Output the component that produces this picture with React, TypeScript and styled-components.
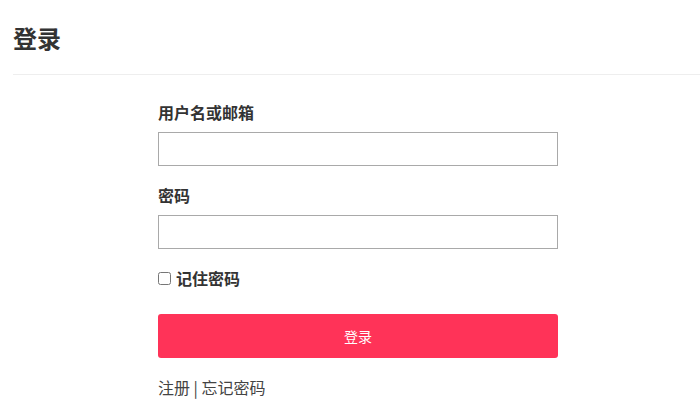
import styled, { createGlobalStyle } from "styled-components";

const GlobalStyle = createGlobalStyle`
body {
  margin: 0;
  background: #fff;
  font-family: "Noto Sans CJK SC", "Noto Sans", sans-serif;
  color: #333;
}
`

const Page = styled.div`
width: 700px;
height: 416px;
overflow: hidden;
`

const Header = styled.div`
padding: 20px 0 18px;
border-bottom: 1px solid #eeeeee;
margin-left: 13px;
`

const Title = styled.h1`
margin: 0;
font-size: 24px;
line-height: 36px;
font-weight: bold;
color: #333;
`

const Form = styled.form`
width: 400px;
margin-left: 158px;
padding-top: 25px;
display: flex;
flex-direction: column;
`

const Field = styled.div`
display: flex;
flex-direction: column;
margin-bottom: 17px;
`

const Label = styled.label`
font-size: 16px;
line-height: 24px;
font-weight: bold;
color: #333;
margin-bottom: 8px;
`

const Input = styled.input`
box-sizing: border-box;
width: 100%;
height: 34px;
border: 1px solid #a9a9a9;
border-radius: 0;
padding: 0 8px;
font-size: 14px;
outline: none;
`

const CheckRow = styled.label`
display: flex;
align-items: center;
font-size: 16px;
line-height: 24px;
font-weight: bold;
color: #333;
`

const Check = styled.input`
width: 13px;
height: 13px;
margin: 1px 5px 0 0;
`

const Button = styled.button`
margin-top: 24px;
height: 44px;
width: 100%;
border: none;
border-radius: 3px;
background: #ff3358;
color: #fff;
font-family: inherit;
font-size: 14px;
cursor: pointer;
`

const Links = styled.div`
margin-top: 17px;
font-size: 16px;
line-height: 24px;
color: #444;
`

const Link = styled.a`
color: #444;
text-decoration: none;
`

export default function App() {
  return (
    <Page>
      <GlobalStyle />
      <Header>
        <Title>登录</Title>
      </Header>
      <Form onSubmit={e => e.preventDefault()}>
        <Field>
          <Label>用户名或邮箱</Label>
          <Input type="text" />
        </Field>
        <Field>
          <Label>密码</Label>
          <Input type="password" />
        </Field>
        <CheckRow>
          <Check type="checkbox" />
          记住密码
        </CheckRow>
        <Button type="submit">登录</Button>
        <Links>
          <Link href="#">注册</Link> | <Link href="#">忘记密码</Link>
        </Links>
      </Form>
    </Page>
  );
}
